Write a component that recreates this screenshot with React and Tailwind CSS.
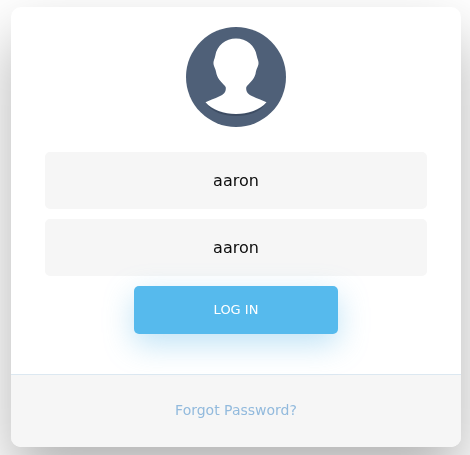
import React from "react";

function Avatar() {
  return (
    <svg viewBox="0 0 100 100" className="block h-[100px] w-[100px]">
      <circle cx="50" cy="50" r="50" fill="#4f6078" />
      <path
        d="M19.5 75.3C26 84 38 87 50 87C62 87 74 84 80.5 75.3C75 85.5 62 89 50 89C38 89 25 85.5 19.5 75.3Z"
        fill="#36445a"
        opacity="0.7"
      />
      <path
        d="M50 11.5C60.5 11.5 69 18 70.8 29C71.2 32 73 34 72.5 37C72 40 70.5 41 69.5 47C68 53 63 56 60.3 60C59.5 65 62.5 67.5 67 69.5C71 71.5 76 73 80.5 75.3C74 83 62 87 50 87C38 87 26 83 19.5 75.3C24 73 29 71.5 33 69.5C37.5 67.5 40.5 65 39.7 60C37 56 32 53 30.5 47C29.5 41 28 40 27.5 37C27 34 28.8 32 29.2 29C31 18 39.5 11.5 50 11.5Z"
        fill="#ffffff"
      />
    </svg>
  );
}

export default function App() {
  return (
    <div className="h-screen overflow-hidden bg-white pl-[11px] pt-[7px] font-['DejaVu_Sans',sans-serif]">
      <div className="w-[450px] overflow-hidden rounded-[10px] bg-white text-center shadow-[0_30px_60px_0_rgba(0,0,0,0.3)] will-change-transform">
        <div className="flex justify-center pt-5 pb-[25px]">
          <Avatar />
        </div>

        <form className="flex flex-col items-center">
          <input
            type="text"
            defaultValue="aaron"
            className="mb-[10px] h-[57px] w-[382.5px] rounded-[5px] border-2 border-[#f6f6f6] bg-[#f6f6f6] px-8 text-center text-base text-[#0d0d0d] outline-none"
          />
          <input
            type="text"
            defaultValue="aaron"
            className="mb-[10px] h-[57px] w-[382.5px] rounded-[5px] border-2 border-[#f6f6f6] bg-[#f6f6f6] px-8 text-center text-base text-[#0d0d0d] outline-none"
          />
          <button
            type="button"
            className="mb-10 h-12 w-[204px] rounded-[5px] bg-[#56baed] text-[13px] text-white uppercase shadow-[0_10px_30px_0_rgba(95,186,233,0.4)]"
          >
            Log in
          </button>
        </form>

        <div className="h-[73px] border-t border-[#dce8f1] bg-[#f6f6f6] pt-[25px] text-sm leading-[21px]">
          <a href="#" className="text-[#92badd]">
            Forgot Password?
          </a>
        </div>
      </div>
    </div>
  );
}
